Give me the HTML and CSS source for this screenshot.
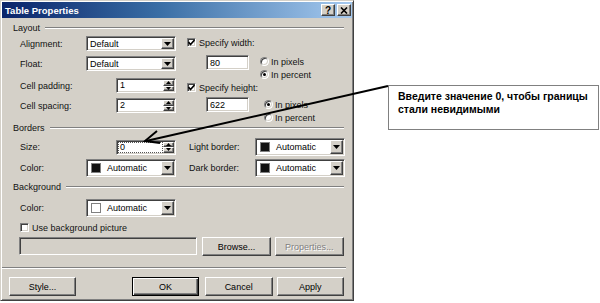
FILE: index.html
```html
<!DOCTYPE html>
<html lang="ru">
<head>
  <meta charset="UTF-8" />
  <title>Table Properties</title>
  <link rel="stylesheet" href="styles.css">
</head>
<body>
<div class="canvas">

  <div class="dialog">
    <div class="titlebar">
      <span class="title">Table Properties</span>
      <div class="caption-btns">
        <span class="cap-btn">?</span>
        <span class="cap-btn">
          <svg width="8" height="7" viewBox="0 0 8 7"><path d="M1 0.5 L7 6.5 M7 0.5 L1 6.5" stroke="#000" stroke-width="1.6"/></svg>
        </span>
      </div>
    </div>

    <div class="content">
      <!-- Layout -->
      <div class="group-head"><span>Layout</span><i class="etch"></i></div>
      <div class="layout-body">
        <div class="col-left">
          <div class="field">
            <label>Alignment:</label>
            <div class="select sunken"><span class="val">Default</span><span class="drop raised"><svg width="7" height="4"><polygon points="0,0 7,0 3.5,4" fill="#000"/></svg></span></div>
          </div>
          <div class="field">
            <label>Float:</label>
            <div class="select sunken"><span class="val">Default</span><span class="drop raised"><svg width="7" height="4"><polygon points="0,0 7,0 3.5,4" fill="#000"/></svg></span></div>
          </div>
          <div class="field spin first-spin">
            <label>Cell padding:</label>
            <div class="spinner sunken"><span class="val">1</span><span class="spin-btns"><i class="raised"><svg width="5" height="3"><polygon points="2.5,0 5,3 0,3" fill="#000"/></svg></i><i class="raised"><svg width="5" height="3"><polygon points="0,0 5,0 2.5,3" fill="#000"/></svg></i></span></div>
          </div>
          <div class="field spin">
            <label>Cell spacing:</label>
            <div class="spinner sunken"><span class="val">2</span><span class="spin-btns"><i class="raised"><svg width="5" height="3"><polygon points="2.5,0 5,3 0,3" fill="#000"/></svg></i><i class="raised"><svg width="5" height="3"><polygon points="0,0 5,0 2.5,3" fill="#000"/></svg></i></span></div>
          </div>
        </div>

        <div class="col-right">
          <div class="check-row">
            <span class="checkbox sunken"><svg width="7" height="7" viewBox="0 0 7 7"><polyline points="0.5,3 2.5,5.5 6.5,1" fill="none" stroke="#000" stroke-width="1.6"/></svg></span>
            <span>Specify width:</span>
          </div>
          <div class="dim-row">
            <div class="input sunken">80</div>
            <div class="radios">
              <div class="radio-row"><span class="radio sunken"></span>In pixels</div>
              <div class="radio-row"><span class="radio sunken on"></span>In percent</div>
            </div>
          </div>
          <div class="check-row">
            <span class="checkbox sunken"><svg width="7" height="7" viewBox="0 0 7 7"><polyline points="0.5,3 2.5,5.5 6.5,1" fill="none" stroke="#000" stroke-width="1.6"/></svg></span>
            <span>Specify height:</span>
          </div>
          <div class="dim-row second">
            <div class="input sunken">622</div>
            <div class="radios">
              <div class="radio-row"><span class="radio sunken on"></span>In pixels</div>
              <div class="radio-row"><span class="radio sunken"></span>In percent</div>
            </div>
          </div>
        </div>
      </div>

      <!-- Borders -->
      <div class="group-head"><span>Borders</span><i class="etch"></i></div>
      <div class="borders-body">
        <div class="field tall spin">
          <label>Size:</label>
          <div class="spinner sunken focus"><span class="val">0</span><span class="spin-btns"><i class="raised"><svg width="5" height="3"><polygon points="2.5,0 5,3 0,3" fill="#000"/></svg></i><i class="raised"><svg width="5" height="3"><polygon points="0,0 5,0 2.5,3" fill="#000"/></svg></i></span></div>
        </div>
        <div class="field tall">
          <label>Light border:</label>
          <div class="select color sunken"><span class="swatch black"></span><span class="val">Automatic</span><span class="drop raised"><svg width="7" height="4"><polygon points="0,0 7,0 3.5,4" fill="#000"/></svg></span></div>
        </div>
        <div class="field tall">
          <label>Color:</label>
          <div class="select color sunken"><span class="swatch black"></span><span class="val">Automatic</span><span class="drop raised"><svg width="7" height="4"><polygon points="0,0 7,0 3.5,4" fill="#000"/></svg></span></div>
        </div>
        <div class="field tall">
          <label>Dark border:</label>
          <div class="select color sunken"><span class="swatch black"></span><span class="val">Automatic</span><span class="drop raised"><svg width="7" height="4"><polygon points="0,0 7,0 3.5,4" fill="#000"/></svg></span></div>
        </div>
      </div>

      <!-- Background -->
      <div class="group-head bg-head"><span>Background</span><i class="etch"></i></div>
      <div class="bg-body">
        <div class="field tall">
          <label>Color:</label>
          <div class="select color sunken"><span class="swatch white"></span><span class="val">Automatic</span><span class="drop raised"><svg width="7" height="4"><polygon points="0,0 7,0 3.5,4" fill="#000"/></svg></span></div>
        </div>
        <div class="check-row bg-check">
          <span class="checkbox sunken"></span>
          <span>Use background picture</span>
        </div>
        <div class="path-row">
          <div class="path sunken"></div>
          <span class="btn raised browse">Browse...</span>
          <span class="btn raised disabled props">Properties...</span>
        </div>
      </div>

      <i class="separator"></i>
      <div class="footer">
        <span class="btn raised style-btn">Style...</span>
        <span class="btn default ok-btn">OK</span>
        <span class="btn raised cancel-btn">Cancel</span>
        <span class="btn raised apply-btn">Apply</span>
      </div>
    </div>
  </div>

  <div class="callout">Введите значение 0, чтобы границы<br>стали невидимыми</div>

  <svg class="pointer" width="600" height="303" viewBox="0 0 600 303">
    <line x1="388" y1="86" x2="146" y2="141" stroke="#000" stroke-width="2"/>
    <polyline points="157,131 145,141 160,143" fill="none" stroke="#000" stroke-width="2"/>
  </svg>
</div>
</body>
</html>
```

FILE: styles.css
```css
* {
  box-sizing: border-box;
}

body {
  margin: 0;
  background: #fff;
  font-family: 'Liberation Sans', Arial, sans-serif;
  font-size: 9px;
  color: #111;
}

.canvas {
  position: relative;
  width: 600px;
  height: 303px;
  overflow: hidden;
}

/* 3D borders */
.sunken {
  background: #fff;
  border: 1px solid;
  border-color: #808080 #fff #fff #808080;
  box-shadow: inset 1px 1px #404040, inset -1px -1px #d4d0c8;
}

.raised {
  background: #d4d0c8;
  border: 1px solid;
  border-color: #fff #404040 #404040 #fff;
  box-shadow: inset -1px -1px #808080;
}

.dialog {
  width: 354px;
  height: 301px;
  padding: 1px;
  background: #d4d0c8;
  border: 1px solid;
  border-color: #d4d0c8 #404040 #404040 #d4d0c8;
  box-shadow: inset 1px 1px #fff, inset -1px -1px #808080;
}

.titlebar {
  height: 16px;
  display: flex;
  align-items: center;
  justify-content: space-between;
  padding: 0 1px 0 3px;
  background: linear-gradient(90deg, #0a246a 0%, #3a6ea5 45%, #a6caf0 100%);
}

.title {
  color: #fff;
  font-weight: bold;
  font-size: 9.5px;
}

.caption-btns {
  display: flex;
  gap: 2px;
}

.cap-btn {
  width: 14px;
  height: 12px;
  display: flex;
  align-items: center;
  justify-content: center;
  font-weight: bold;
  font-size: 10px;
  color: #000;
  background: #d4d0c8;
  border: 1px solid;
  border-color: #fff #404040 #404040 #fff;
  box-shadow: inset -1px -1px #808080;
}

.content {
  padding: 4px 8px 0 11px;
}

.group-head {
  display: flex;
  align-items: center;
  height: 12px;
}

.etch {
  flex: 1;
  height: 2px;
  margin-left: 5px;
  border-top: 1px solid #808080;
  border-bottom: 1px solid #fff;
}

/* Layout group */
.layout-body {
  display: flex;
  height: 88px;
  padding: 2px 0 0 7px;
}

.col-left {
  width: 156px;
  flex: none;
  display: flex;
  flex-direction: column;
  gap: 5px;
}

.first-spin {
  margin-top: 2px;
}

.col-right {
  margin-left: 11px;
}

.field {
  display: flex;
  align-items: center;
  height: 15px;
}

.field.tall {
  height: 18px;
}

.field label {
  width: 66px;
  flex: none;
}

.field.spin label {
  width: 96px;
}

.select {
  width: 90px;
  height: 15px;
  display: flex;
  align-items: center;
  padding: 1px;
}

.select.color {
  height: 18px;
}

.val {
  flex: 1;
  padding-left: 2px;
  color: #000;
}

.drop {
  width: 13px;
  height: 100%;
  display: flex;
  align-items: center;
  justify-content: center;
}

.swatch {
  width: 10px;
  height: 10px;
  margin: 0 4px 0 3px;
  border: 1px solid #808080;
}

.swatch.black {
  background: #111;
}

.swatch.white {
  background: #fff;
}

.spinner {
  width: 61px;
  height: 15px;
  display: flex;
  padding: 1px;
}

.spinner.focus .val {
  outline: 1px dotted #555;
  outline-offset: -1px;
}

.spin-btns {
  width: 11px;
  display: flex;
  flex-direction: column;
}

.spin-btns i {
  flex: 1;
  display: flex;
  align-items: center;
  justify-content: center;
}

.check-row {
  display: flex;
  align-items: center;
  gap: 3px;
  height: 13px;
}

.checkbox {
  width: 9px;
  height: 9px;
  display: flex;
  align-items: center;
  justify-content: center;
}

.dim-row {
  display: flex;
  margin: 6px 0 0 19px;
}

.dim-row.second {
  margin-top: 3px;
}

.input {
  width: 43px;
  height: 15px;
  padding: 1px 0 0 3px;
  line-height: 12px;
  color: #000;
}

.radios {
  margin-left: 11px;
}

.dim-row.second .radios {
  margin: 1px 0 0 15px;
}

.radio-row {
  display: flex;
  align-items: center;
  gap: 2px;
  height: 13px;
}

.radio {
  width: 9px;
  height: 9px;
  border-radius: 50%;
  display: flex;
  align-items: center;
  justify-content: center;
}

.radio.on::after {
  content: '';
  width: 3px;
  height: 3px;
  border-radius: 50%;
  background: #000;
}

/* Borders group */
.borders-body {
  display: grid;
  grid-template-columns: 156px 156px;
  column-gap: 13px;
  row-gap: 3px;
  padding-left: 7px;
  margin-top: 4px;
}

/* Background group */
.bg-head {
  margin-top: 4px;
}

.bg-body {
  padding-left: 7px;
  padding-top: 6px;
}

.bg-check {
  margin-top: 4px;
}

.path-row {
  display: flex;
  align-items: flex-start;
  margin: 3px 0 0 -1px;
}

.path {
  width: 180px;
  height: 18px;
  background: #d4d0c8;
}

.btn {
  height: 19px;
  display: flex;
  align-items: center;
  justify-content: center;
  color: #000;
}

.browse {
  width: 69px;
  margin-left: 5px;
}

.props {
  width: 70px;
  margin-left: 4px;
}

.disabled {
  color: #808080;
  text-shadow: 1px 1px #fff;
}

.separator {
  display: block;
  width: 344px;
  height: 2px;
  margin: 11px 0 0 -11px;
  border-top: 1px solid #808080;
  border-bottom: 1px solid #fff;
}

.footer {
  display: flex;
  margin: 8px 0 0 -4px;
}

.style-btn {
  width: 68px;
}

.btn.default {
  width: 67px;
  margin-left: 56px;
  background: #d4d0c8;
  border: 1px solid #000;
  box-shadow: inset 1px 1px #fff, inset -1px -1px #404040, inset -2px -2px #808080;
}

.cancel-btn {
  width: 69px;
  margin-left: 6px;
}

.apply-btn {
  width: 68px;
  margin-left: 4px;
}

/* annotation */
.callout {
  position: absolute;
  left: 388px;
  top: 85px;
  width: 211px;
  height: 45px;
  padding: 4px 0 0 9px;
  border: 1px solid #808080;
  background: #fff;
  font-weight: bold;
  font-size: 10.5px;
  line-height: 13px;
  color: #000;
}

.pointer {
  position: absolute;
  left: 0;
  top: 0;
  pointer-events: none;
}
```
